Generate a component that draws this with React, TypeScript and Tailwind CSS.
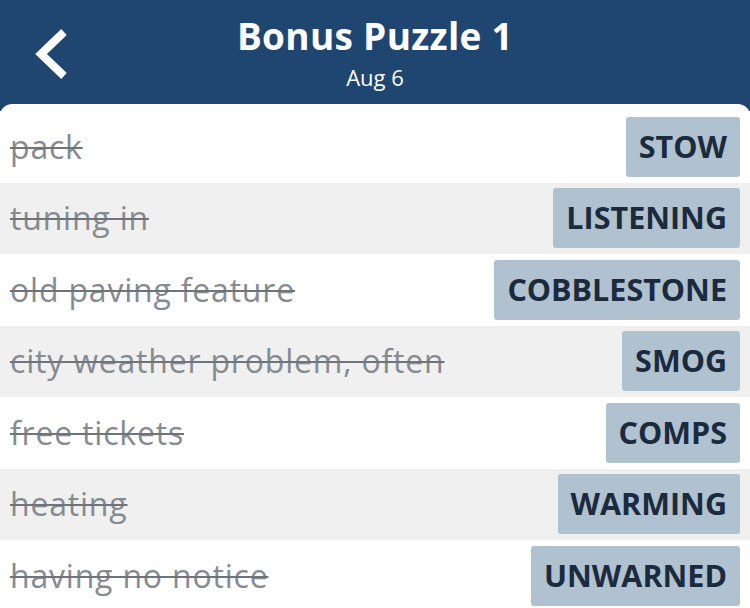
const clues = [
    { clue: 'pack', answer: 'STOW' },
    { clue: 'tuning in', answer: 'LISTENING' },
    { clue: 'old paving feature', answer: 'COBBLESTONE' },
    { clue: 'city weather problem, often', answer: 'SMOG' },
    { clue: 'free tickets', answer: 'COMPS' },
    { clue: 'heating', answer: 'WARMING' },
    { clue: 'having no notice', answer: 'UNWARNED' },
]

export default function App() {
    return (
        <div className="w-[750px] h-[608px] overflow-hidden bg-[#1f4571] font-['Open_Sans',sans-serif]">
            <div className="relative h-[104px] flex flex-col items-center pt-[10px]">
                <button className="absolute left-[30px] top-[26px] text-white">
                    <svg width="46" height="56" viewBox="0 0 46 56">
                        <path d="M34 6 L11 28 L34 50" fill="none" stroke="white" strokeWidth="8" strokeLinecap="butt" />
                    </svg>
                </button>
                <div className="text-white font-bold text-[37px] leading-[52px] tracking-[0.3px]">Bonus Puzzle 1</div>
                <div className="text-white text-[22px] leading-[30px]">Aug 6</div>
            </div>
            <div className="bg-white rounded-t-[12px] pt-[7px]">
                {clues.map((c, i) => (
                    <div
                        key={c.clue}
                        className={`h-[71.5px] flex items-center justify-between pl-[10px] pr-[10px] ${i % 2 === 1 ? 'bg-[#f0f0f0]' : 'bg-white'}`}
                    >
                        <div className="text-[32px] tracking-[0.8px] text-[#868b92] line-through decoration-[#6f747b] decoration-2">{c.clue}</div>
                        <div className="h-[60px] flex items-center px-[13px] rounded-[3px] bg-[#b0c1cf] text-[#1b2b3d] font-bold text-[30.5px]">
                            {c.answer}
                        </div>
                    </div>
                ))}
            </div>
        </div>
    )
}
